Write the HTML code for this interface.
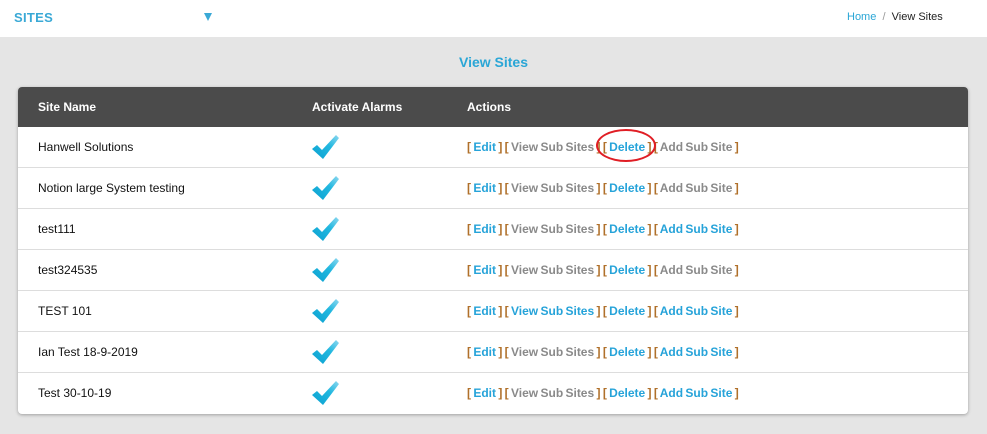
<!DOCTYPE html><html><head><style>
body{margin:0;width:987px;height:434px;background:#e5e5e5;font-family:"Liberation Sans",Arial,sans-serif;position:relative;overflow:hidden}
.top{position:absolute;left:0;top:0;width:987px;height:37px;background:#fff}
.sites{position:absolute;left:14px;top:10px;color:#3aa9d6;font-weight:bold;font-size:13px;letter-spacing:.3px}
.tri{position:absolute;left:204px;top:13px;width:0;height:0;border-left:4px solid transparent;border-right:4px solid transparent;border-top:8px solid #3aa9d6}
.bc{position:absolute;left:847px;top:11px;font-size:11px;color:#222}
.bc span{color:#2aa6d6}
h1{position:absolute;left:0;width:987px;top:54px;margin:0;text-align:center;font-size:14px;color:#2aa6d6;font-weight:bold}
.card{position:absolute;left:18px;top:87px;width:950px;height:327px;background:#fff;border-radius:4px;box-shadow:0 1px 3px rgba(0,0,0,.3);overflow:hidden}
.hd{height:40px;background:#4b4b4b;color:#fff;font-weight:bold;font-size:12px;position:relative}
.row{height:40px;border-bottom:1px solid #ddd;position:relative;font-size:12px;color:#111}
.row.last{border-bottom:0}
.c1{position:absolute;left:20px;top:13px}
.c2{position:absolute;left:294px;top:13px}
.c3{position:absolute;left:449px;top:13px;font-weight:bold;color:#b0702a;white-space:nowrap;word-spacing:-1px}
.b{color:#26a3d9}.g{color:#8a8a8a}
.ck{position:absolute;left:294px;top:7px}
.ring{position:absolute;left:596px;top:129px;width:60px;height:33px;border:2px solid #e01e25;border-radius:50%;box-sizing:border-box}
</style></head><body>
<div class="top"><div class="sites">SITES</div><div class="tri"></div><div class="bc"><span>Home</span><span style="color:#999">&nbsp; / &nbsp;</span>View Sites</div></div>
<h1>View Sites</h1>
<svg width="0" height="0" style="position:absolute"><defs><linearGradient id="gr" x1="0" y1="1" x2="1" y2="0"><stop offset="0" stop-color="#0aa0d0"/><stop offset="0.6" stop-color="#22b8e0"/><stop offset="1" stop-color="#8fd8f0"/></linearGradient></defs></svg>
<div class="card">
<div class="hd"><div class="c1">Site Name</div><div class="c2">Activate Alarms</div><div class="c3" style="color:#fff">Actions</div></div>

<div class="row"><div class="c1">Hanwell Solutions</div><svg class="ck" width="28" height="26" viewBox="0 0 28 26"><path d="M0 15 L5 11 L10 16 L24 1 L27 4 L11 25 Z" fill="url(#gr)"/></svg><div class="c3">[ <span class="b">Edit</span> ] [ <span class="g">View Sub Sites</span> ] [ <span class="b">Delete</span> ] [ <span class="g">Add Sub Site</span> ]</div></div>

<div class="row"><div class="c1">Notion large System testing</div><svg class="ck" width="28" height="26" viewBox="0 0 28 26"><path d="M0 15 L5 11 L10 16 L24 1 L27 4 L11 25 Z" fill="url(#gr)"/></svg><div class="c3">[ <span class="b">Edit</span> ] [ <span class="g">View Sub Sites</span> ] [ <span class="b">Delete</span> ] [ <span class="g">Add Sub Site</span> ]</div></div>

<div class="row"><div class="c1">test111</div><svg class="ck" width="28" height="26" viewBox="0 0 28 26"><path d="M0 15 L5 11 L10 16 L24 1 L27 4 L11 25 Z" fill="url(#gr)"/></svg><div class="c3">[ <span class="b">Edit</span> ] [ <span class="g">View Sub Sites</span> ] [ <span class="b">Delete</span> ] [ <span class="b">Add Sub Site</span> ]</div></div>

<div class="row"><div class="c1">test324535</div><svg class="ck" width="28" height="26" viewBox="0 0 28 26"><path d="M0 15 L5 11 L10 16 L24 1 L27 4 L11 25 Z" fill="url(#gr)"/></svg><div class="c3">[ <span class="b">Edit</span> ] [ <span class="g">View Sub Sites</span> ] [ <span class="b">Delete</span> ] [ <span class="g">Add Sub Site</span> ]</div></div>

<div class="row"><div class="c1">TEST 101</div><svg class="ck" width="28" height="26" viewBox="0 0 28 26"><path d="M0 15 L5 11 L10 16 L24 1 L27 4 L11 25 Z" fill="url(#gr)"/></svg><div class="c3">[ <span class="b">Edit</span> ] [ <span class="b">View Sub Sites</span> ] [ <span class="b">Delete</span> ] [ <span class="b">Add Sub Site</span> ]</div></div>

<div class="row"><div class="c1">Ian Test 18-9-2019</div><svg class="ck" width="28" height="26" viewBox="0 0 28 26"><path d="M0 15 L5 11 L10 16 L24 1 L27 4 L11 25 Z" fill="url(#gr)"/></svg><div class="c3">[ <span class="b">Edit</span> ] [ <span class="g">View Sub Sites</span> ] [ <span class="b">Delete</span> ] [ <span class="b">Add Sub Site</span> ]</div></div>

<div class="row last"><div class="c1">Test 30-10-19</div><svg class="ck" width="28" height="26" viewBox="0 0 28 26"><path d="M0 15 L5 11 L10 16 L24 1 L27 4 L11 25 Z" fill="url(#gr)"/></svg><div class="c3">[ <span class="b">Edit</span> ] [ <span class="g">View Sub Sites</span> ] [ <span class="b">Delete</span> ] [ <span class="b">Add Sub Site</span> ]</div></div>
</div>
<div class="ring"></div>
</body></html>
